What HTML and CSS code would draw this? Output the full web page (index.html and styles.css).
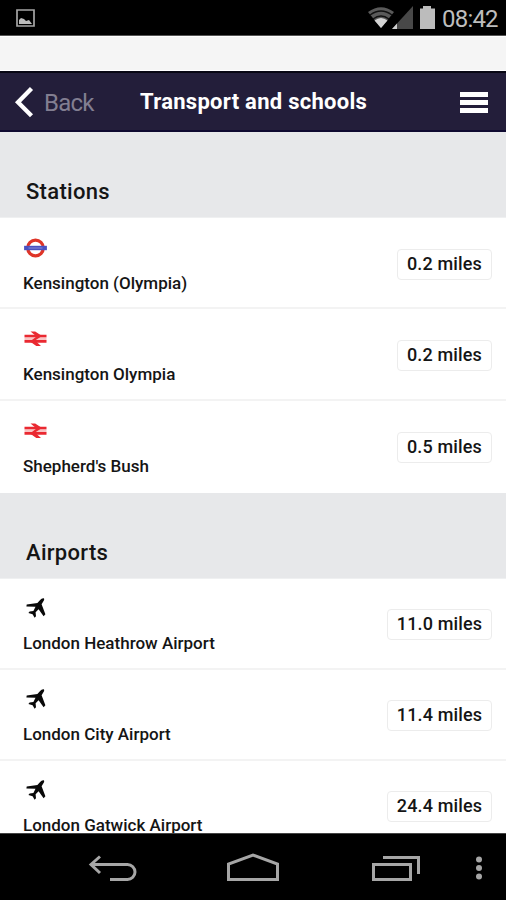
FILE: index.html
```html
<!DOCTYPE html>
<html lang="en">
<head>
<meta charset="utf-8">
<title>Transport and schools</title>
<link rel="stylesheet" href="styles.css">
</head>
<body>
<svg class="defs" width="0" height="0" aria-hidden="true">
  <symbol id="tube" viewBox="0 0 24 20">
    <circle cx="12" cy="10" r="7.8" fill="#fff" stroke="#df3528" stroke-width="3.2"/>
    <rect x=".6" y="7.8" width="22.8" height="4.4" fill="#4a51c0"/>
    <path d="M5 10h14" stroke="#8589da" stroke-width="1"/>
  </symbol>
  <symbol id="rail" viewBox="0 0 24 20">
    <path d="M1 9.700h22" stroke="#f9c4c4" stroke-width="3"/>
    <path d="M1 7h22M1 12.400h22" stroke="#ea2931" stroke-width="2.700"/>
    <path d="M7 2.500h4.700l6.800 4.500-7 4.500 6 5.500h-4.700l-6.300-4.600 6.500-4.900z" fill="#ea2931"/>
  </symbol>
  <symbol id="plane" viewBox="0 0 24 20">
    <path d="M20.200.3c1 .7.4 2.100-.6 3.500l-1.500 2.500 3.800 9.900-1.800 2-5-7-3 3.100.4 3.900-1.400 1.500-2-3.400-4.200-1.200 1.200-1.700 3.800-.3 2.100-4.400-9.100-.3.3-2 10.700-1.500 2.500-2.700C17.700.9 19.200-.2 20.200.3z" fill="#090909"/>
  </symbol>
</svg>
<div class="screen">
  <div class="status">
    <svg width="20" height="19" viewBox="0 0 20 19"><path d="M1 1h17v16H1z" fill="none" stroke="#a5a5a5" stroke-width="1.700"/><path d="M3 15v-4l2-2 3 1 2 2 3-1 3 4z" fill="#bdbdbd"/></svg>
    <div class="status-right">
      <svg width="69" height="25" viewBox="0 0 69 25">
        <path d="M1 7Q14-2.500 27 7L14 23z" fill="#5a5a5a"/>
        <path d="M3 10q11-8 22 0M6 14q8-6 16 0" fill="none" stroke="#111" stroke-width="1.300"/>
        <path d="M7.500 15.500q6.500-5 13 0L14 23z" fill="#d5d5d5"/>
        <path d="M46 1v23H25z" fill="#484848"/><path d="M30 18.500V24h-5z" fill="#d0d0d0"/>
        <path d="M56 1h8v2.500h4V24H53V3.500h3z" fill="#bcbcbc"/>
      </svg>
      <span class="time">08:42</span>
    </div>
  </div>
  <div class="strip"></div>
  <header class="header">
    <div class="back">
      <svg width="20" height="32" viewBox="0 0 20 32"><path d="M17.500 2.500L4 16.200l13.500 13.600" fill="none" stroke="#fff" stroke-width="4.300"/></svg>
      <span class="back-label">Back</span>
    </div>
    <h1 class="title">Transport and schools</h1>
    <div class="burger"><i></i><i></i><i></i></div>
  </header>
  <main class="content">
    <h2 class="section">Stations</h2>
    <div class="row"><div class="place"><svg class="icon"><use href="#tube"/></svg><span class="name">Kensington (Olympia)</span></div><span class="badge">0.2 miles</span></div>
    <div class="row"><div class="place"><svg class="icon"><use href="#rail"/></svg><span class="name">Kensington Olympia</span></div><span class="badge">0.2 miles</span></div>
    <div class="row last"><div class="place"><svg class="icon"><use href="#rail"/></svg><span class="name">Shepherd's Bush</span></div><span class="badge">0.5 miles</span></div>
    <h2 class="section">Airports</h2>
    <div class="row airport"><div class="place"><svg class="icon"><use href="#plane"/></svg><span class="name">London Heathrow Airport</span></div><span class="badge wide">11.0 miles</span></div>
    <div class="row airport"><div class="place"><svg class="icon"><use href="#plane"/></svg><span class="name">London City Airport</span></div><span class="badge wide">11.4 miles</span></div>
    <div class="row airport"><div class="place"><svg class="icon"><use href="#plane"/></svg><span class="name">London Gatwick Airport</span></div><span class="badge wide">24.4 miles</span></div>
  </main>
  <nav class="nav">
    <svg width="50" height="32" viewBox="0 0 50 32"><path d="M13 4.500L4 12.500l9 8.500M4 12.500h36.500a7.500 7.500 0 0 1 0 15H23" fill="none" stroke="#a6a6a6" stroke-width="3"/></svg>
    <svg width="56" height="32" viewBox="0 0 56 32"><path d="M3.500 27.500V12L28 3l24.500 9v15.500z" fill="none" stroke="#a6a6a6" stroke-width="3"/></svg>
    <svg width="52" height="32" viewBox="0 0 52 32"><path d="M2.500 12.500h37v15h-37zM12 5.500h35.500V22" fill="none" stroke="#a6a6a6" stroke-width="3"/></svg>
    <svg width="10" height="32" viewBox="0 0 10 32" fill="#a6a6a6"><circle cx="5" cy="7.500" r="3"/><circle cx="5" cy="16" r="3"/><circle cx="5" cy="24.500" r="3"/></svg>
  </nav>
</div>
</body>
</html>
```
FILE: styles.css
```css
* { box-sizing: border-box; }
body { margin: 0; font-family: Roboto, "Liberation Sans", sans-serif; color: #151515; }
.defs { display: none; }
.screen { width: 506px; height: 900px; display: flex; flex-direction: column; overflow: hidden; background: #fff; }
.status { flex: none; height: 36px; background: #000; display: flex; justify-content: space-between; padding: 0 7px 0 16px; border-bottom: 1px solid #555; }
.status > svg { margin-top: 9px; }
.status-right { display: flex; padding-top: 5px; gap: 6px; }
.time { font-size: 24px; line-height: 28px; color: #bdbdbd; width: 57px; letter-spacing: -.8px; white-space: nowrap; }
.strip { flex: none; height: 35px; background: #f5f5f5; border: solid #fff; border-width: 1px 0; }
.header { flex: none; height: 61px; background: #231e3a; border-top: 2px solid #080714; border-bottom: 2px solid #0f0a31; display: grid; grid-template-columns: 140px 1fr 46px; align-items: center; }
.back { display: flex; align-items: center; padding-left: 14px; gap: 10px; }
.back-label { font-size: 24px; line-height: 30px; color: #827e91; letter-spacing: -.8px; padding-top: 3px; }
.title { margin: 0; font-size: 22px; line-height: 30px; font-weight: 700; color: #fff; letter-spacing: .28px; white-space: nowrap; }
.burger { width: 28px; height: 24px; display: flex; flex-direction: column; gap: 3px; padding-top: 2px; }
.burger i { height: 5.500px; background: #fff; }
.content { flex: 1; min-height: 0; overflow: hidden; }
.section { margin: 0; height: 86px; padding: 45px 26px 0; background: #e7e8ea; font-size: 22px; line-height: 30px; font-weight: 500; letter-spacing: .3px; border-bottom: 1px solid #eff0f1; }
.row { height: 91.400px; border-bottom: 2px solid #f3f3f3; display: flex; justify-content: space-between; align-items: flex-start; padding: 20px 14px 0 23px; }
.row.last { height: 92.200px; border-color: transparent; }
.row.airport { height: 91px; padding-top: 19px; }
.place { display: flex; flex-direction: column; gap: 15px; }
.icon { width: 25px; height: 20px; display: block; }
.name { font-size: 17px; line-height: 21px; font-weight: 500; white-space: nowrap; }
.badge { width: 95px; height: 31px; margin-top: 11px; border: 1.500px solid #ececec; border-radius: 4px; font-size: 18px; line-height: 27px; font-weight: 500; text-align: center; white-space: nowrap; letter-spacing: .15px; }
.badge.wide { width: 105px; }
.nav { flex: none; height: 67px; background: #000; border-top: 1px solid #444; display: grid; grid-template-columns: 138px 146px 103px 1fr; padding: 18px 0 0 87px; }
```
